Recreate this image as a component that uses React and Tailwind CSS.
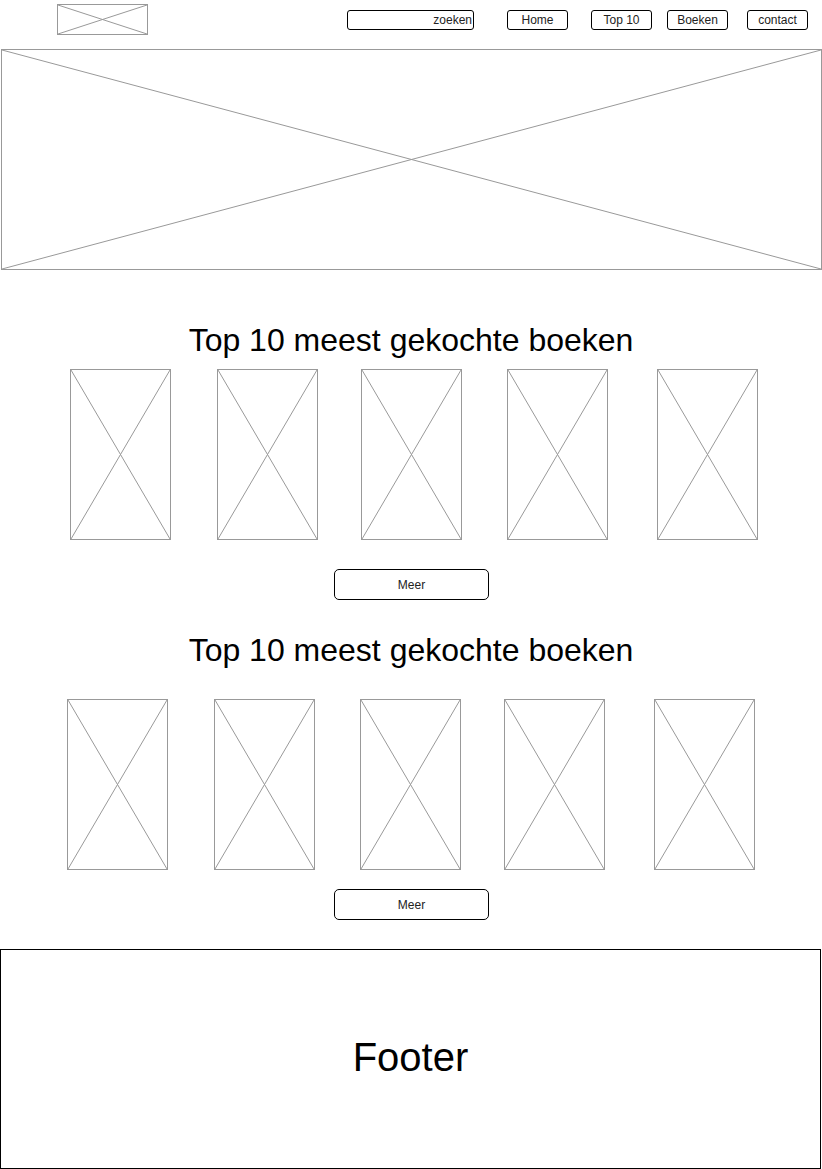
const Placeholder = ({ className }) => (
  <div className={`border border-[#999] ${className}`}>
    <svg
      className="block w-full h-full"
      viewBox="0 0 100 100"
      preserveAspectRatio="none"
    >
      <line x1="0" y1="0" x2="100" y2="100" stroke="#999" strokeWidth="1" vectorEffect="non-scaling-stroke" />
      <line x1="100" y1="0" x2="0" y2="100" stroke="#999" strokeWidth="1" vectorEffect="non-scaling-stroke" />
    </svg>
  </div>
);

const NavButton = ({ label, className }) => (
  <button
    className={`h-[20px] border border-black rounded-[3px] text-[12px] leading-none text-[#222] bg-white ${className}`}
  >
    {label}
  </button>
);

// left margins of each cover, taken from the mockup
const rowOne = ["ml-[70px]", "ml-[46px]", "ml-[43px]", "ml-[45px]", "ml-[49px]"];
const rowTwo = ["ml-[67px]", "ml-[46px]", "ml-[45px]", "ml-[43px]", "ml-[49px]"];

const BookRow = ({ margins }) => (
  <div className="flex">
    {margins.map((m, i) => (
      <Placeholder key={i} className={`w-[101px] h-[171px] ${m}`} />
    ))}
  </div>
);

const Section = ({ margins, top, rowGap, buttonGap }) => (
  <>
    <h2 className={`${top} text-center text-[32px] leading-8 text-black`}>
      Top 10 meest gekochte boeken
    </h2>
    <div className={rowGap}>
      <BookRow margins={margins} />
    </div>
    <div className={buttonGap}>
      <button className="ml-[334px] w-[155px] h-[31px] border border-black rounded-[5px] text-[12px] text-[#222] bg-white">
        Meer
      </button>
    </div>
  </>
);

export default function App() {
  return (
    <div
      className="w-[822px] h-[1169px] bg-white overflow-hidden"
      style={{ fontFamily: "'Liberation Sans', Arial, sans-serif" }}
    >
      {/* Header */}
      <div className="h-[49px] flex items-start">
        <Placeholder className="ml-[57px] mt-[4px] w-[91px] h-[31px]" />
        <div className="ml-[199px] mt-[10px] w-[127px] h-[20px] border border-black rounded-[3px] text-[12px] leading-[18px] text-right pr-[1px] text-[#222]">
          zoeken
        </div>
        <NavButton label="Home" className="mt-[10px] ml-[33px] w-[61px]" />
        <NavButton label="Top 10" className="mt-[10px] ml-[23px] w-[61px]" />
        <NavButton label="Boeken" className="mt-[10px] ml-[15px] w-[61px]" />
        <NavButton label="contact" className="mt-[10px] ml-[19px] w-[61px]" />
      </div>

      {/* Hero */}
      <Placeholder className="ml-[1px] w-[821px] h-[221px]" />

      <Section margins={rowOne} top="mt-[54px]" rowGap="mt-[13px]" buttonGap="mt-[29px]" />
      <Section margins={rowTwo} top="mt-[34px]" rowGap="mt-[33px]" buttonGap="mt-[19px]" />

      {/* Footer */}
      <div className="mt-[29px] w-[821px] h-[220px] border border-black flex items-center justify-center">
        <span className="text-[40px] text-black -mt-[4px]">Footer</span>
      </div>
    </div>
  );
}
